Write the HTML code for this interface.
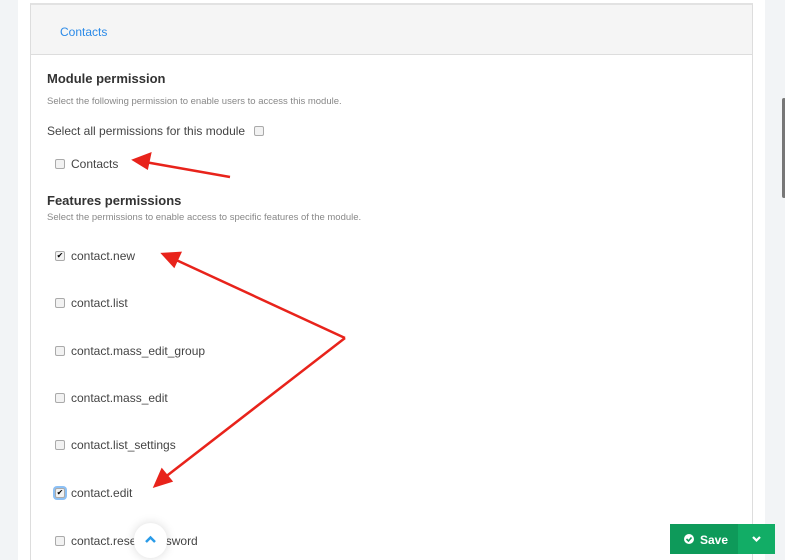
<!DOCTYPE html><html style="overflow:hidden;height:560px"><head><style>
body{margin:0;width:785px;height:560px;overflow:hidden;background:#fff;font-family:"Liberation Sans",sans-serif;position:relative}
.l{position:absolute;left:0;top:0;width:18px;height:560px;background:#f2f4f6}
.r{position:absolute;left:765px;top:0;width:20px;height:560px;background:#f2f4f6}
.thumb{position:absolute;left:782px;top:98px;width:4px;height:100px;background:#777;border-radius:2px}
.panel{position:absolute;left:30px;top:3px;width:721px;height:570px;border:1px solid #ddd;border-top:2px solid #e2e2e2;border-bottom:none}
.hd{height:49px;background:#f5f5f5;border-bottom:1px solid #ddd}
.hd span{position:absolute;left:29px;top:20px;font-size:12px;color:#2a8ae8}
.t{position:absolute;font-size:12px;color:#444}
.h{position:absolute;font-size:13px;color:#333;font-weight:bold}
.s{position:absolute;font-size:9.5px;color:#888}
.cb{position:absolute;width:8px;height:8px;border:1px solid #aaa;border-radius:2px;background:#f2f2f2}
.save{position:absolute;left:670px;top:524px;width:68px;height:30px;background:#0e9a5a;color:#fff;font-size:12px;font-weight:bold}
.dd{position:absolute;left:738px;top:524px;width:37px;height:30px;background:#12ad66}
.up{position:absolute;left:134px;top:523px;width:33px;height:35px;border-radius:17px;background:#fff;box-shadow:0 0 10px rgba(0,0,0,.15)}
</style></head><body>
<div class="l"></div><div class="r"></div><div class="thumb"></div>
<div class="panel"><div class="hd"><span>Contacts</span></div></div>
<div class="h" style="left:47px;top:71px">Module permission</div>
<div class="s" style="left:47px;top:96px">Select the following permission to enable users to access this module.</div>
<div class="t" style="left:47px;top:124px">Select all permissions for this module</div>
<div class="cb" style="left:254px;top:126px"></div>
<div class="cb" style="left:55px;top:159px"></div><div class="t" style="left:71px;top:157px">Contacts</div>
<div class="h" style="left:47px;top:193px">Features permissions</div>
<div class="s" style="left:47px;top:212px">Select the permissions to enable access to specific features of the module.</div>
<div class="cb" style="left:55px;top:251px;font-size:8px;line-height:8px;text-align:center">✔</div><div class="t" style="left:71px;top:249px">contact.new</div>
<div class="cb" style="left:55px;top:298px"></div><div class="t" style="left:71px;top:296px">contact.list</div>
<div class="cb" style="left:55px;top:346px"></div><div class="t" style="left:71px;top:344px">contact.mass_edit_group</div>
<div class="cb" style="left:55px;top:393px"></div><div class="t" style="left:71px;top:391px">contact.mass_edit</div>
<div class="cb" style="left:55px;top:440px"></div><div class="t" style="left:71px;top:438px">contact.list_settings</div>
<div class="cb" style="left:55px;top:488px;font-size:8px;line-height:8px;text-align:center;box-shadow:0 0 0 2px #8cc0f5">✔</div><div class="t" style="left:71px;top:486px">contact.edit</div>
<div class="cb" style="left:55px;top:536px"></div><div class="t" style="left:71px;top:534px">contact.reset_password</div>
<div class="up"><svg width="33" height="35"><path d="M12 19l4.5-4.5L21 19" stroke="#2a9be8" stroke-width="2.5" fill="none"/></svg></div>
<div class="save"><svg style="position:absolute;left:14px;top:10px" width="10" height="10"><circle cx="5" cy="5" r="5" fill="#fff"/><path d="M2.5 5l2 2 3-3.5" stroke="#0e9a5a" stroke-width="1.6" fill="none"/></svg><span style="position:absolute;left:30px;top:9px">Save</span></div>
<div class="dd"><svg width="37" height="30"><path d="M15 13l3.5 3.5L22 13" stroke="#fff" stroke-width="2.2" fill="none"/></svg></div>
<svg style="position:absolute;left:0;top:0" width="785" height="560"><g stroke="#e8231b" stroke-width="2.5" fill="#e8231b">
<line x1="230" y1="177" x2="145" y2="162"/><polygon points="134,160 150,154 147,168"/>
<line x1="345" y1="338" x2="174" y2="259"/><polygon points="163,254 180,253 174,266"/>
<line x1="345" y1="338" x2="164" y2="478"/><polygon points="155,486 162,470 171,481"/>
</g></svg>
</body></html>
